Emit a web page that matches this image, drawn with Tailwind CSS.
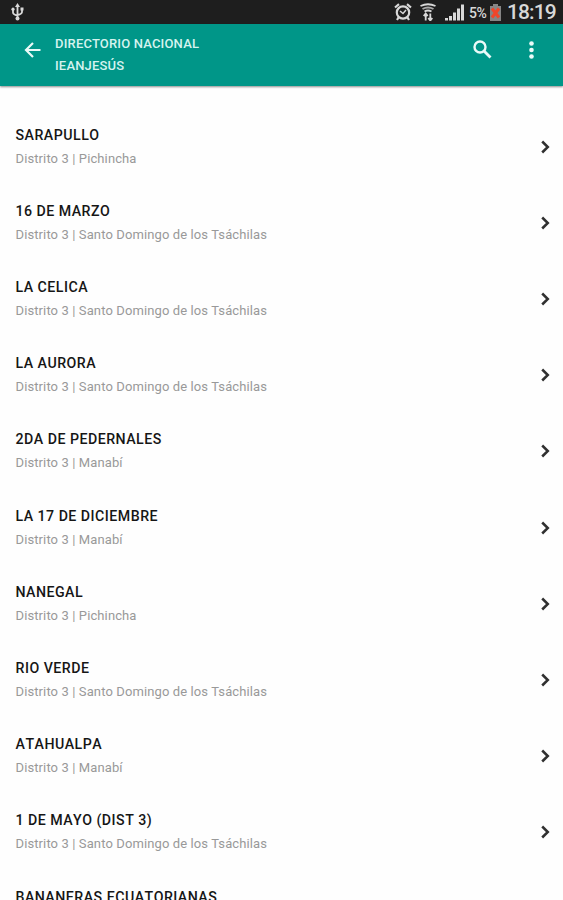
<!DOCTYPE html>
<html lang="es">

<head>
  <meta charset="UTF-8" />
  <meta name="viewport" content="width=device-width, initial-scale=1" />
  <title>Directorio Nacional IEANJESÚS</title>
  <script src="https://cdn.jsdelivr.net/npm/@tailwindcss/browser@4"></script>
</head>

<body class="bg-[#fefefe] font-[Roboto,sans-serif]">
  <div class="h-[900px] overflow-hidden flex flex-col">
    <!-- Status bar -->
    <div class="h-6 shrink-0 bg-[#1e1e1e] flex items-center justify-between pl-[11px] pr-[6px] text-[#d8d8d8]">
      <svg class="w-[13px] h-[18px]" viewBox="0 0 13 18" fill="none" stroke="currentColor" stroke-width="1.8">
        <path d="M6.5 3v12M2 6v3.500q0 2 4.500 3M11 6v3q0 2-4.500 3" />
        <path d="M6.500 0L9 4H4zM9.500 4.500h3v3h-3z" fill="currentColor" stroke="none" />
        <circle cx="2" cy="6.200" r="1.600" fill="currentColor" stroke="none" />
        <circle cx="6.500" cy="15.500" r="2" fill="currentColor" stroke="none" />
      </svg>
      <div class="flex items-center">
        <svg class="w-[18px] h-[18px]" viewBox="0 0 18 18" fill="none" stroke="currentColor" stroke-width="2.2">
          <circle cx="9" cy="9.500" r="6.200" />
          <path d="M1 4.500L5 1.200M17 4.500L13 1.200M4.500 14.500L3 17M13.500 14.500L15 17" />
          <path d="M6 8l3 2.500L12 7" stroke-width="1.500" />
        </svg>
        <svg class="w-4 h-[18px] ml-2" viewBox="0 0 16 18" fill="none" stroke="currentColor" stroke-width="1.900">
          <path d="M.5 3Q8-.5 15.500 3" />
          <path d="M2.500 6Q8 3 13.500 6" stroke="#a8a8a8" />
          <path d="M4.500 8.500Q8 6.500 11.500 8.500" />
          <path d="M5.700 17.500v-6M10.300 10.500v6M3.700 13l2-2.500 2 2.500M8.300 15l2 2.500 2-2.500" stroke-width="1.800" />
        </svg>
        <svg class="w-[19px] h-[18px] ml-[9px]" viewBox="0 0 19 18" fill="currentColor">
          <path d="M0 15h3v2.500H0zM4 13h3v4.500H4zM8 9.500h3v8H8zM12 5.500h3v12h-3zM16 1.500h3v16h-3z" />
        </svg>
        <span class="w-[20px] ml-[5px] -mr-px text-[14px] leading-6 font-medium tracking-[-0.500px] whitespace-nowrap pt-[2px]">5%</span>
        <svg class="w-[11px] h-[17px] ml-[2px]" viewBox="0 0 11 17">
          <path d="M0 2h3V0h5v2h3v15H0z" fill="#858585" />
          <path d="M2 4.500l7 9M9 4.500l-7 9" stroke="#f0452a" stroke-width="3" />
        </svg>
        <span class="w-[50px] ml-[6px] text-[21px] leading-6 font-medium tracking-[-0.900px] whitespace-nowrap">18:19</span>
      </div>
    </div>

    <!-- Toolbar -->
    <header class="h-[62px] shrink-0 bg-[#009688] flex items-start pl-6 pr-[29px] text-[#eafaf8] shadow-[0_1px_2px_rgba(0,0,0,0.45)]">
      <svg class="w-[17px] h-4 mt-[18px]" viewBox="0 0 17 16" fill="none" stroke="currentColor" stroke-width="2.200">
        <path d="M16.500 8H2M9 1L2 8l7 7" />
      </svg>
      <h1 class="grow ml-[14px] mt-[9px] text-[13px] leading-[22px] font-medium tracking-[0.180px] text-[#d5f3ef]">
        <span class="block w-fit">DIRECTORIO NACIONAL</span>
        <span class="block w-fit">IEANJESÚS</span>
      </h1>
      <svg class="w-[19px] h-[19px] mt-4" viewBox="0 0 19 19" fill="none" stroke="currentColor">
        <circle cx="7" cy="7" r="5.500" stroke-width="2.400" />
        <path d="M11 11l6.500 6.500" stroke-width="2.800" />
      </svg>
      <svg class="w-[5px] h-[18px] ml-[37px] mt-[17px]" viewBox="0 0 5 18" fill="currentColor">
        <circle cx="2.500" cy="2.500" r="2.300" />
        <circle cx="2.500" cy="9" r="2.300" />
        <circle cx="2.500" cy="15.500" r="2.300" />
      </svg>
    </header>

    <ul id="churchList" class="pt-[22.600px]"></ul>
  </div>

  <script>
    const churches = [
      ['SARAPULLO', 'Pichincha'],
      ['16 DE MARZO', 'Santo Domingo de los Tsáchilas'],
      ['LA CELICA', 'Santo Domingo de los Tsáchilas'],
      ['LA AURORA', 'Santo Domingo de los Tsáchilas'],
      ['2DA DE PEDERNALES', 'Manabí'],
      ['LA 17 DE DICIEMBRE', 'Manabí'],
      ['NANEGAL', 'Pichincha'],
      ['RIO VERDE', 'Santo Domingo de los Tsáchilas'],
      ['ATAHUALPA', 'Manabí'],
      ['1 DE MAYO (DIST 3)', 'Santo Domingo de los Tsáchilas'],
      ['BANANERAS ECUATORIANAS', 'Manabí']
    ];

    document.getElementById('churchList').innerHTML = churches.map(([name, province]) => `
      <li class="h-[76.200px] flex items-center justify-between pl-[15.500px] pr-[13px]">
        <div>
          <h2 class="w-fit text-[14.200px] leading-6 font-medium [font-kerning:none] tracking-[0.480px] text-[#161616]">${name}</h2>
          <p class="w-fit text-[13px] leading-6 tracking-[0.110px] text-[#999]">Distrito 3 | ${province}</p>
        </div>
        <svg class="w-[9px] h-[14px]" viewBox="0 0 9 14" fill="none" stroke="#303030" stroke-width="2.500">
          <path d="M1.200 1.500L6.800 7l-5.600 5.500" />
        </svg>
      </li>`).join('');
  </script>
</body>

</html>
